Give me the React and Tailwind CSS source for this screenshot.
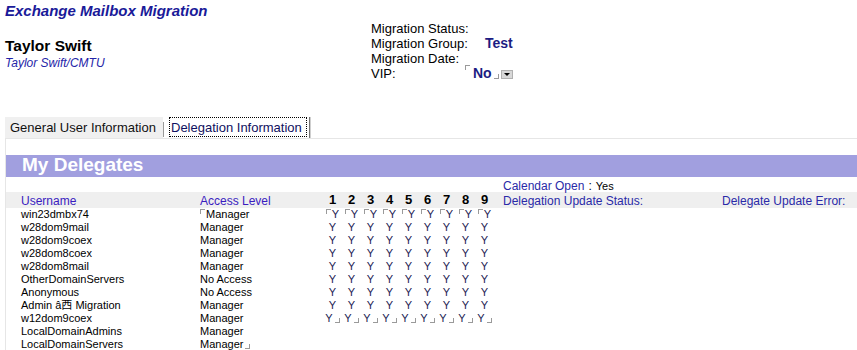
const USERS = [
  { name: "win23dmbx74", access: "Manager", ys: true, mark: "open" },
  { name: "w28dom9mail", access: "Manager", ys: true },
  { name: "w28dom9coex", access: "Manager", ys: true },
  { name: "w28dom8coex", access: "Manager", ys: true },
  { name: "w28dom8mail", access: "Manager", ys: true },
  { name: "OtherDomainServers", access: "No Access", ys: true },
  { name: "Anonymous", access: "No Access", ys: true },
  { name: "Admin â西 Migration", access: "Manager", ys: true },
  { name: "w12dom9coex", access: "Manager", ys: true, mark: "close" },
  { name: "LocalDomainAdmins", access: "Manager" },
  { name: "LocalDomainServers", access: "Manager", accessMark: "close" },
];
const COLS = [1, 2, 3, 4, 5, 6, 7, 8, 9];

function Open() {
  return <span className="inline-block w-[5px] h-[5px] border-l border-t border-[#9a9a9a] align-top mt-[1px] mr-[1px]" />;
}
function Close() {
  return <span className="inline-block w-[5px] h-[5px] border-r border-b border-[#9a9a9a] align-baseline -mb-[1px] ml-[2px]" />;
}

export default function App() {
  return (
    <div className="min-h-screen bg-white text-black" style={{ fontFamily: '"Liberation Sans", Arial, "Noto Sans CJK SC", sans-serif' }}>
      <div className="flex h-[117px]">
        <div className="w-[371px] shrink-0 pl-[5px] pt-[2px]">
          <div className="text-[15px] leading-[18px] font-bold italic text-[#1a1a99]">Exchange Mailbox Migration</div>
          <div className="mt-[17px] text-[15.5px] leading-[18px] font-bold">Taylor Swift</div>
          <div className="mt-[1px] text-[12px] leading-[14px] italic text-[#2424a8]">Taylor Swift/CMTU</div>
        </div>
        <div className="pt-[21px] text-[13px] leading-[15px] whitespace-nowrap">
          <div className="flex"><span className="w-[94px] shrink-0">Migration Status:</span></div>
          <div className="flex"><span className="w-[94px] shrink-0">Migration Group:</span><span className="ml-[20px] text-[14px] font-bold text-[#1c1c82]">Test</span></div>
          <div className="flex"><span className="w-[94px] shrink-0">Migration Date:</span></div>
          <div className="flex items-start">
            <span className="w-[94px] shrink-0">VIP:</span>
            <span className="flex items-start">
              <span className="inline-block w-[5px] h-[5px] border-l border-t border-[#9a9a9a] mt-[-1px] mr-[3px]" />
              <span className="text-[14px] font-bold text-[#1c1c82] leading-[15px]">No</span>
              <span className="inline-block w-[5px] h-[5px] border-r border-b border-[#9a9a9a] mt-[8px] ml-[2px]" />
              <span className="ml-[2px] mt-[4px] w-[12px] h-[9px] bg-[#d8d8d8] border border-[#b0b0b0] flex items-center justify-center">
                <span className="w-0 h-0 border-l-[3px] border-r-[3px] border-t-[3px] border-l-transparent border-r-transparent border-t-black" />
              </span>
            </span>
          </div>
        </div>
      </div>

      <div className="flex h-[21px] pl-[5px] text-[13px] text-[#111]">
        <div className="w-[158px] bg-[#f0f0f0] pl-[5px] leading-[22px]">General User Information</div>
        <div className="w-[1px] h-[15px] self-end mb-[1px] bg-[#9a9a9a]" />
        <div className="ml-[5px] w-[138px] h-[20px] border border-dotted border-black pl-[1px] leading-[19px] text-[#101060]">Delegation Information</div>
        <div className="ml-[2px] w-[1px] bg-[#747474]" />
        <div className="w-[1px] bg-[#cfcfcf]" />
      </div>

      <div className="ml-[5px] border-t border-l border-[#e6e6e6] pt-[16px]">
        <div className="h-[22px] bg-[#a19fdf] pl-[16px] text-[19px] leading-[20px] font-bold text-white">My Delegates</div>
        <div className="h-[15px] pl-[497px] pt-[2px] text-[12px] leading-[14px] flex">
          <span className="text-[#2a2aa8]">Calendar Open</span>
          <span className="ml-[4px]">:</span>
          <span className="ml-[4px] text-[11px]">Yes</span>
        </div>
        <div className="h-[16px] bg-[#efefef] flex text-[12px] leading-[19px] whitespace-nowrap">
          <span className="pl-[15px] w-[194px] shrink-0 text-[#3a1cc0]">Username</span>
          <span className="w-[123px] shrink-0 text-[#3a1cc0]">Access Level</span>
          <div className="flex text-[13px] font-bold leading-[15px]">
            {COLS.map((c) => (
              <span key={c} className="w-[19px] text-center">{c}</span>
            ))}
          </div>
          <span className="ml-[9px] w-[219px] shrink-0 text-[#2a2aa8] leading-[18px]">Delegation Update Status:</span>
          <span className="text-[#2a2aa8] leading-[18px]">Delegate Update Error:</span>
        </div>
        {USERS.map((u) => (
          <div key={u.name} className="h-[13px] flex text-[11px] leading-[13px] whitespace-nowrap">
            <span className="pl-[15px] w-[194px] shrink-0">{u.name}</span>
            <span className="w-[123px] shrink-0">
              {u.mark === "open" && <Open />}
              {u.access}
              {u.accessMark === "close" && <Close />}
            </span>
            {u.ys && (
              <div className="flex text-[#1c1c52]">
                {COLS.map((c) => (
                  <span key={c} className="w-[19px] text-center">
                    {u.mark === "open" && <Open />}Y{u.mark === "close" && <Close />}
                  </span>
                ))}
              </div>
            )}
          </div>
        ))}
      </div>
    </div>
  );
}
